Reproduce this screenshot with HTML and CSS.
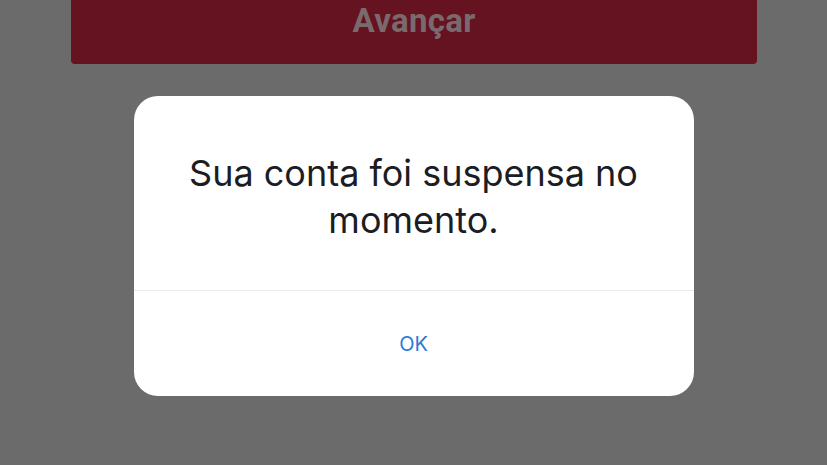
FILE: index.html
```html
<!DOCTYPE html>
<html lang="pt">
<head>
<meta charset="utf-8">
<link rel="stylesheet" href="styles.css">
</head>
<body>
<div class="page">
  <div class="primary-btn">Avançar</div>
  <div class="alert">
    <div class="alert-body">
      <p class="alert-msg">Sua conta foi suspensa no<br>momento.</p>
    </div>
    <div class="alert-actions">
      <span class="alert-ok">OK</span>
    </div>
  </div>
</div>
</body>
</html>
```
FILE: styles.css
```css
html, body {
  margin: 0;
  padding: 0;
  background: #6b6b6b;
  width: 827px;
  height: 465px;
  overflow: hidden;
}
.page {
  display: flex;
  flex-direction: column;
  align-items: center;
}
.primary-btn {
  margin-top: -24px;
  width: 686px;
  height: 88px;
  margin-left: 1px;
  background: #651321;
  border-radius: 0 0 4px 4px;
  display: flex;
  align-items: center;
  justify-content: center;
  font-family: Roboto, "Liberation Sans", sans-serif;
  font-weight: 700;
  font-size: 33px;
  letter-spacing: 0.3px;
  color: #7b6a6d;
}
.alert {
  margin-top: 32px;
  width: 560px;
  height: 300px;
  background: #ffffff;
  border-radius: 24px;
  display: flex;
  flex-direction: column;
}
.alert-body {
  height: 194px;
  display: flex;
  align-items: center;
  justify-content: center;
  border-bottom: 1px solid #ebebeb;
}
.alert-msg {
  margin: 0;
  padding-top: 8px;
  text-align: center;
  font-family: Inter, "Liberation Sans", sans-serif;
  font-size: 36px;
  line-height: 47px;
  color: #1c1c24;
}
.alert-actions {
  flex: 1;
  display: flex;
  align-items: center;
  justify-content: center;
}
.alert-ok {
  font-family: Inter, "Liberation Sans", sans-serif;
  font-size: 20px;
  color: #2a7bd9;
}
```
